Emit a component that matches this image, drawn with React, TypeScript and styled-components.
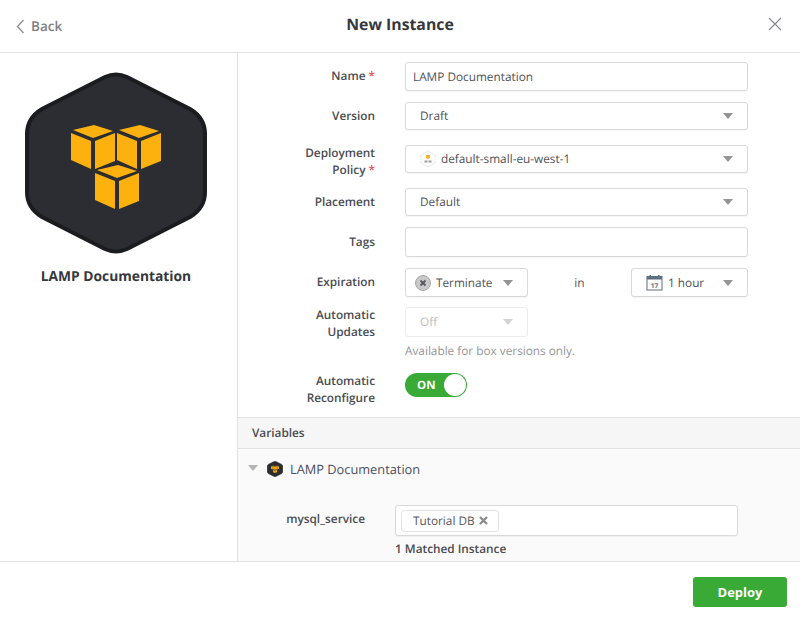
import { ReactNode } from 'react';
import { createGlobalStyle, styled } from 'styled-components';

const GlobalStyle = createGlobalStyle`
  html, body {
    margin: 0;
    padding: 0;
    background: #fff;
  }

  body {
    font-family: 'Open Sans', 'Liberation Sans', sans-serif;
    color: #3c3e44;
    text-rendering: geometricPrecision;
  }
`;

const Page = styled.div`
  width: 800px;
  height: 617px;
  display: flex;
  flex-direction: column;
  overflow: hidden;
`;

const Header = styled.header`
  height: 52px;
  flex: none;
  display: grid;
  grid-template-columns: 1fr auto 1fr;
  align-items: center;
  padding: 0 16px;
  border-bottom: 1px solid #e2e2e2;
`;

const BackLink = styled.div`
  display: flex;
  align-items: center;
  gap: 6px;
  font-size: 13.5px;
  font-weight: 600;
  color: #7f8185;
`;

const Title = styled.h1`
  margin: 0 0 5px;
  font-size: 15.8px;
  font-weight: 700;
  color: #35373c;
`;

const CloseButton = styled.div`
  justify-self: end;
  display: flex;
  margin-top: -5px;
  margin-right: 2px;
`;

const Body = styled.main`
  flex: 1;
  min-height: 0;
  display: flex;
`;

const Sidebar = styled.aside`
  width: 232px;
  flex: none;
  display: flex;
  flex-direction: column;
  align-items: center;
  padding: 19px 5px 0 0;
  border-right: 1px solid #e2e2e2;
`;

const SidebarName = styled.div`
  margin-top: 13px;
  font-size: 13.8px;
  font-weight: 700;
  color: #35373c;
`;

const Content = styled.section`
  flex: 1;
  min-width: 0;
  overflow: hidden;
  display: flex;
  flex-direction: column;
`;

const Form = styled.div`
  padding: 9px 52px 10px 0;
`;

const Row = styled.div<{ $gap?: number; $top?: boolean }>`
  display: grid;
  grid-template-columns: 137px 343px;
  column-gap: 30px;
  align-items: ${(p) => (p.$top ? 'start' : 'center')};
  margin-bottom: ${(p) => p.$gap ?? 11}px;
`;

const Label = styled.div`
  text-align: right;
  font-size: 11.8px;
  line-height: 17px;
  font-weight: 600;
  color: #4a4c51;
`;

const Required = styled.span`
  color: #e8555a;
`;

const Field = styled.div<{ $height?: number; $muted?: boolean }>`
  height: ${(p) => p.$height ?? 29}px;
  box-sizing: border-box;
  display: flex;
  align-items: center;
  padding: 0 7px;
  background: #fff;
  border: 1px solid ${(p) => (p.$muted ? '#ececec' : '#d9d9d9')};
  border-radius: 3px;
  box-shadow: ${(p) => (p.$muted ? 'none' : '0 1px 1px rgba(0, 0, 0, 0.04)')};
  font-size: 11.8px;
  color: ${(p) => (p.$muted ? '#bcbdbf' : '#4f5156')};
`;

const Select = styled(Field)<{ $width?: number }>`
  ${(p) => (p.$width ? `width: ${p.$width}px;` : '')}
  padding: 0 14px 0 14px;
  gap: 5px;
`;

const SelectText = styled.span`
  flex: 1;
  white-space: nowrap;
`;

const Caret = styled.span<{ $muted?: boolean }>`
  width: 0;
  height: 0;
  flex: none;
  border-left: 5.5px solid transparent;
  border-right: 5.5px solid transparent;
  border-top: 6px solid ${(p) => (p.$muted ? '#d4d4d4' : '#949494')};
`;

const ExpirationControls = styled.div`
  display: flex;
  align-items: center;
  justify-content: space-between;
`;

const InText = styled.span`
  font-size: 12px;
  color: #55575c;
`;

const Hint = styled.div`
  margin-top: 6px;
  font-size: 11.8px;
  line-height: 17px;
  color: #94969a;
`;

const Toggle = styled.div`
  width: 62px;
  height: 24px;
  box-sizing: border-box;
  display: flex;
  align-items: center;
  justify-content: space-between;
  padding: 1px 1px 1px 12px;
  border-radius: 12px;
  background: #38aa35;
  color: #fff;
  font-size: 11.5px;
  font-weight: 700;
`;

const ToggleKnob = styled.span`
  width: 22px;
  height: 22px;
  border-radius: 50%;
  background: #fff;
`;

const Variables = styled.div`
  flex: 1;
  background: #fafafa;
  border-top: 1px solid #e2e2e2;
`;

const VariablesHeader = styled.div`
  height: 30px;
  display: flex;
  align-items: center;
  padding-left: 14px;
  background: #f6f6f6;
  border-bottom: 1px solid #e2e2e2;
  font-size: 11.8px;
  font-weight: 600;
  color: #4a4c51;
`;

const BoxHeading = styled.div`
  display: flex;
  align-items: center;
  padding: 11px 0 0 10px;
  font-size: 12.8px;
  color: #4c4e5e;
`;

const BoxCaret = styled(Caret)`
  margin: -2px 9px 0 0;
  border-top-color: #b5b5b5;
`;

const BoxName = styled.span`
  margin-left: 7px;
`;

const VariableRow = styled.div`
  display: grid;
  grid-template-columns: 127px 343px;
  column-gap: 30px;
  padding-top: 27px;
`;

const VariableName = styled.div`
  text-align: right;
  font-size: 11.8px;
  font-weight: 600;
  line-height: 17px;
  padding-top: 6px;
  color: #4a4c51;
`;

const Chip = styled.span`
  height: 22px;
  box-sizing: border-box;
  display: flex;
  align-items: center;
  gap: 4px;
  padding: 0 10px 0 11px;
  margin-left: -2px;
  border: 1px solid #e2e2e2;
  border-radius: 3px;
  background: #fff;
  font-size: 11.8px;
  color: #55575c;
`;

const Matched = styled.div`
  margin-top: 5px;
  font-size: 11.8px;
  line-height: 17px;
  font-weight: 600;
  color: #4a4c51;
`;

const Footer = styled.footer`
  height: 56px;
  flex: none;
  box-sizing: border-box;
  display: flex;
  align-items: flex-start;
  justify-content: flex-end;
  padding: 15px 13px 0 0;
  border-top: 1px solid #e2e2e2;
`;

const DeployButton = styled.button`
  width: 94px;
  height: 30px;
  border: 0;
  border-radius: 3px;
  background: #38aa35;
  color: #fff;
  font-family: inherit;
  font-size: 13px;
  font-weight: 700;
`;

const cubeOffsets = [
  [0, 0],
  [46, 0],
  [24, 40],
];

const BoxLogo = ({ size }: { size: number }) => (
  <svg width={size} height={size} viewBox="0 0 182 182" style={{ flex: 'none' }}>
    <path
      d="M80 5 Q91 0 102 5 L165 37 Q180 46 180 62 L180 120 Q180 136 165 145 L102 177 Q91 182 80 177 L17 145 Q2 136 2 120 L2 62 Q2 46 17 37 Z"
      fill="#2c2d32"
      stroke="#1b1c20"
      strokeWidth="4"
    />
    {cubeOffsets.map(([x, y]) => (
      <g key={`${x}-${y}`} transform={`translate(${x} ${y})`} fill="#fdb10f">
        <path d="M48 58 L69 53 L88 59 L68 66 Z" />
        <path d="M46 61 L66 69 L66 97 L46 88 Z" />
        <path d="M70 69 L90 61 L90 89 L70 97 Z" />
      </g>
    ))}
  </svg>
);

const PolicyIcon = () => (
  <svg width="16" height="18" viewBox="0 0 16 18" style={{ flex: 'none' }}>
    <path d="M8 1 L15 5 L15 13 L8 17 L1 13 L1 5 Z" fill="#fff" stroke="#eceaea" strokeLinejoin="round" />
    <path d="M6 5 L10 5 L10 8 L8 9 L6 8 Z" fill="#f7b52a" />
    <rect x="4.5" y="10.5" width="3" height="2" fill="#9a9c9f" />
    <rect x="8.5" y="10.5" width="3" height="2" fill="#9a9c9f" />
  </svg>
);

const TerminateIcon = () => (
  <svg width="16" height="16" viewBox="0 0 16 16" style={{ flex: 'none', marginLeft: -5 }}>
    <circle cx="8" cy="8" r="7.5" fill="#c9c9c9" stroke="#a9a9a9" />
    <path d="M5.5 5.5 L10.5 10.5 M10.5 5.5 L5.5 10.5" stroke="#56585c" strokeWidth="1.8" />
  </svg>
);

const CalendarIcon = () => (
  <svg width="17" height="17" viewBox="0 0 17 17" style={{ flex: 'none' }}>
    <rect x="1" y="2.5" width="15" height="13.5" fill="#fff" stroke="#5d6f80" />
    <rect x="1" y="2.5" width="15" height="3" fill="#5d6f80" />
    <rect x="3.5" y="1" width="1.5" height="3" fill="#5d6f80" />
    <rect x="12" y="1" width="1.5" height="3" fill="#5d6f80" />
    <text x="8.5" y="13.5" textAnchor="middle" fontSize="6.5" fontWeight="700" fill="#5d6f80" fontFamily="'Open Sans', sans-serif">
      17
    </text>
  </svg>
);

const FormRow = ({ label, gap, top, children }: { label: ReactNode; gap?: number; top?: boolean; children: ReactNode }) => (
  <Row $gap={gap} $top={top}>
    <Label>{label}</Label>
    <div>{children}</div>
  </Row>
);

const App = () => {
  return (
    <Page>
      <GlobalStyle />
      <Header>
        <BackLink>
          <svg width="9" height="15" viewBox="0 0 9 15">
            <path d="M7.5 1 L1.5 7.5 L7.5 14" fill="none" stroke="#8a8c90" strokeWidth="1.3" />
          </svg>
          Back
        </BackLink>
        <Title>New Instance</Title>
        <CloseButton>
          <svg width="14" height="14" viewBox="0 0 14 14">
            <path d="M1 1 L13 13 M13 1 L1 13" stroke="#8a8c90" strokeWidth="1.2" />
          </svg>
        </CloseButton>
      </Header>
      <Body>
        <Sidebar>
          <BoxLogo size={182} />
          <SidebarName>LAMP Documentation</SidebarName>
        </Sidebar>
        <Content>
          <Form>
            <FormRow label={<>Name <Required>*</Required></>}>
              <Field>LAMP Documentation</Field>
            </FormRow>
            <FormRow label="Version" gap={15}>
              <Select $height={28}>
                <SelectText>Draft</SelectText>
                <Caret />
              </Select>
            </FormRow>
            <FormRow label={<>Deployment<br />Policy <Required>*</Required></>} gap={9} top>
              <Select $height={28}>
                <PolicyIcon />
                <SelectText>default-small-eu-west-1</SelectText>
                <Caret />
              </Select>
            </FormRow>
            <FormRow label="Placement">
              <Select $height={28}>
                <SelectText>Default</SelectText>
                <Caret />
              </Select>
            </FormRow>
            <FormRow label="Tags">
              <Field $height={30} />
            </FormRow>
            <FormRow label="Expiration" gap={10}>
              <ExpirationControls>
                <Select $width={123}>
                  <TerminateIcon />
                  <SelectText>Terminate</SelectText>
                  <Caret />
                </Select>
                <InText>in</InText>
                <Select $width={117}>
                  <CalendarIcon />
                  <SelectText>1 hour</SelectText>
                  <Caret />
                </Select>
              </ExpirationControls>
            </FormRow>
            <FormRow label={<>Automatic<br />Updates</>} gap={13} top>
              <Select $width={123} $height={30} $muted>
                <SelectText>Off</SelectText>
                <Caret $muted />
              </Select>
              <Hint>Available for box versions only.</Hint>
            </FormRow>
            <FormRow label={<>Automatic<br />Reconfigure</>} gap={0} top>
              <Toggle>
                ON
                <ToggleKnob />
              </Toggle>
            </FormRow>
          </Form>
          <Variables>
            <VariablesHeader>Variables</VariablesHeader>
            <BoxHeading>
              <BoxCaret />
              <BoxLogo size={16} />
              <BoxName>LAMP Documentation</BoxName>
            </BoxHeading>
            <VariableRow>
              <VariableName>mysql_service</VariableName>
              <div>
                <Field $height={31}>
                  <Chip>
                    Tutorial DB
                    <svg width="9" height="9" viewBox="0 0 9 9">
                      <path d="M1 1 L8 8 M8 1 L1 8" stroke="#8b8c8f" strokeWidth="2.4" />
                    </svg>
                  </Chip>
                </Field>
                <Matched>1 Matched Instance</Matched>
              </div>
            </VariableRow>
          </Variables>
        </Content>
      </Body>
      <Footer>
        <DeployButton>Deploy</DeployButton>
      </Footer>
    </Page>
  );
};

export default App;
